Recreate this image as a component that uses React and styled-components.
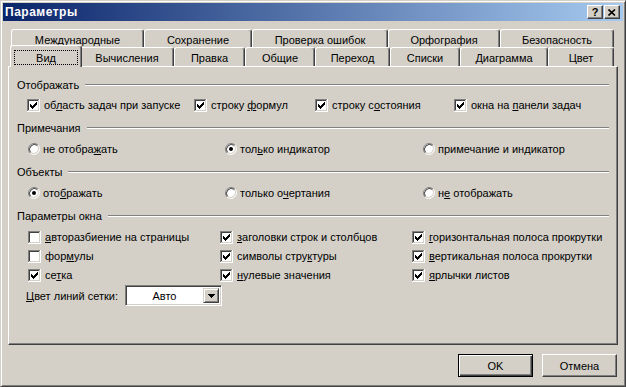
import React from 'react';
import styled, { createGlobalStyle } from 'styled-components';

const backTabs = [
  { name: 'Международные', w: 133 },
  { name: 'Сохранение', w: 108 },
  { name: 'Проверка ошибок', w: 136 },
  { name: 'Орфография', w: 112 },
  { name: 'Безопасность', w: 114 },
];

const frontTabs = [
  { name: 'Вид', w: 68, active: true },
  { name: 'Вычисления', w: 94 },
  { name: 'Правка', w: 71 },
  { name: 'Общие', w: 70 },
  { name: 'Переход', w: 75 },
  { name: 'Списки', w: 70 },
  { name: 'Диаграмма', w: 88 },
  { name: 'Цвет', w: 66 },
];

const showItems = [
  { label: 'об&ласть задач при запуске', on: true },
  { label: 'строку &формул', on: true },
  { label: 'строку с&остояния', on: true },
  { label: 'окна на &панели задач', on: true },
];

const notes = [
  { label: 'не отобра&жать', on: false },
  { label: 'тол&ько индикатор', on: true },
  { label: 'примечание и ин&дикатор', on: false },
];

const objects = [
  { label: 'ото&бражать', on: true },
  { label: 'только о&чертания', on: false },
  { label: 'н&е отображать', on: false },
];

// по строкам сетки: три столбца в каждой
const windowOpts = [
  { label: '&авторазбиение на страницы', on: false },
  { label: '&заголовки строк и столбцов', on: true },
  { label: '&горизонтальная полоса прокрутки', on: true },
  { label: 'фор&мулы', on: false },
  { label: 'символы стру&ктуры', on: true },
  { label: '&вертикальная полоса прокрутки', on: true },
  { label: 'се&тка', on: true },
  { label: '&нулевые значения', on: true },
  { label: '&ярлычки листов', on: true },
];

const GlobalStyle = createGlobalStyle`
  html, body {
    margin: 0;
    padding: 0;
    background: #d4d0c8;
  }
  body {
    font-family: "Liberation Sans", Arial, sans-serif;
    font-size: 11px;
    color: #000;
  }
`;

const Window = styled.div`
  box-sizing: border-box;
  width: 626px;
  height: 387px;
  background: #d4d0c8;
  border: 1px solid;
  border-color: #d4d0c8 #404040 #404040 #d4d0c8;
  box-shadow: inset 1px 1px #fff, inset -1px -1px #808080;
  padding: 2px;
  display: flex;
  flex-direction: column;
`;

const TitleBar = styled.div`
  height: 18px;
  display: flex;
  align-items: center;
  padding: 0 3px 0 2px;
  background: linear-gradient(to right, #0a246a, #a6caf0);
`;

const Title = styled.div`
  flex: 1;
  color: #fff;
  font-weight: bold;
  font-size: 12px;
  letter-spacing: 0.5px;
`;

const CaptionButtons = styled.div`
  display: flex;
  gap: 1px;
`;

const CaptionButton = styled.div`
  box-sizing: border-box;
  width: 16px;
  height: 14px;
  background: #d4d0c8;
  border: 1px solid;
  border-color: #fff #404040 #404040 #fff;
  box-shadow: inset -1px -1px #808080;
  display: flex;
  align-items: center;
  justify-content: center;
  font-weight: bold;
  font-size: 11px;
  line-height: 1;
`;

const Body = styled.div`
  flex: 1;
  display: flex;
  flex-direction: column;
  padding: 8px 5px 7px 5px;
`;

const TabRow = styled.div`
  display: flex;
  align-items: flex-end;
  height: ${p => p.$h}px;
  padding-left: ${p => p.$indent}px;
`;

const Tab = styled.div`
  box-sizing: border-box;
  flex: none;
  width: ${p => (p.$active ? p.$w + 4 : p.$w)}px;
  height: ${p => (p.$active ? 22 : p.$h)}px;
  margin: ${p => (p.$active ? '0 -2px -1px -2px' : '0')};
  position: relative;
  z-index: ${p => (p.$active ? 2 : 1)};
  background: #d4d0c8;
  border-top: 1px solid #fff;
  border-left: 1px solid #fff;
  border-right: 1px solid #404040;
  border-radius: 3px 3px 0 0;
  box-shadow: inset -1px 0 #808080;
  display: flex;
  align-items: ${p => (p.$active ? 'flex-start' : 'center')};
  justify-content: center;
  padding-top: ${p => (p.$active ? 4 : 2)}px;
  font-size: 11px;
`;

const FocusBox = styled.span`
  box-sizing: border-box;
  display: flex;
  align-items: center;
  justify-content: center;
  width: 64px;
  height: 15px;
  border: 1px dotted #000;
`;

const Panel = styled.div`
  box-sizing: border-box;
  height: 279px;
  border: 1px solid;
  border-color: #fff #404040 #404040 #fff;
  box-shadow: inset -1px -1px #808080;
  padding: 11px 8px 0 8px;
  display: flex;
  flex-direction: column;
`;

const Legend = styled.div`
  display: flex;
  align-items: center;
  height: 14px;
  margin-top: ${p => p.$top || 0}px;
`;

const Rule = styled.div`
  flex: 1;
  margin-left: 6px;
  border-top: 1px solid #808080;
  border-bottom: 1px solid #fff;
`;

const OptionGrid = styled.div`
  display: grid;
  grid-template-columns: ${p => p.$cols};
  grid-auto-rows: 18px;
  row-gap: 1px;
  padding-left: ${p => p.$indent}px;
  margin-top: ${p => p.$top}px;
`;

const Option = styled.label`
  display: flex;
  align-items: center;
  gap: ${p => p.$gap}px;
  white-space: nowrap;
`;

const ColorRow = styled.div`
  display: flex;
  align-items: center;
  height: 21px;
  margin-top: 1px;
  padding-left: 9px;
`;

const ColorLabel = styled.span`
  width: 99px;
`;

const Combo = styled.div`
  box-sizing: border-box;
  width: 97px;
  height: 21px;
  border: 1px solid;
  border-color: #808080 #fff #fff #808080;
  box-shadow: inset 1px 1px #404040, inset -1px -1px #d4d0c8;
  background: #fff;
  display: flex;
  padding: 2px;
`;

const ComboText = styled.div`
  flex: 1;
  display: flex;
  align-items: center;
  justify-content: center;
  padding-right: 2px;
`;

const ComboButton = styled.div`
  box-sizing: border-box;
  width: 16px;
  height: 15px;
  background: #d4d0c8;
  border: 1px solid;
  border-color: #d4d0c8 #404040 #404040 #d4d0c8;
  box-shadow: inset 1px 1px #fff, inset -1px -1px #808080;
  display: flex;
  align-items: center;
  justify-content: center;
`;

const Footer = styled.div`
  display: flex;
  justify-content: flex-end;
  gap: 9px;
  margin-top: 9px;
  padding-right: 1px;
`;

const Button = styled.div`
  box-sizing: border-box;
  width: 75px;
  height: 23px;
  display: flex;
  align-items: center;
  justify-content: center;
  background: #d4d0c8;
  border: 1px solid;
  border-color: ${p => (p.$default ? '#000' : '#fff #404040 #404040 #fff')};
  box-shadow: ${p =>
    p.$default
      ? 'inset 1px 1px #fff, inset -1px -1px #404040, inset -2px -2px #808080'
      : 'inset -1px -1px #808080'};
`;

// "&" ставится перед буквой с подчёркиванием
const Label = ({ text }) => {
  const i = text.indexOf('&');
  if (i < 0) return <span>{text}</span>;
  return (
    <span>
      {text.slice(0, i)}
      <u>{text[i + 1]}</u>
      {text.slice(i + 2)}
    </span>
  );
};

const checkPixels = [
  [6, 0], [5, 1], [6, 1], [0, 2], [4, 2], [5, 2], [6, 2],
  [0, 3], [1, 3], [3, 3], [4, 3], [5, 3], [0, 4], [1, 4], [2, 4], [3, 4], [4, 4],
  [1, 5], [2, 5], [3, 5], [2, 6],
];

const CheckBox = ({ on }) => (
  <svg width="13" height="13" viewBox="0 0 13 13" shapeRendering="crispEdges">
    <rect x="0" y="0" width="13" height="13" fill="#fff" />
    <path d="M0 0.5H12.5M0.5 0V12" stroke="#808080" />
    <path d="M1 1.5H11.5M1.5 1V11" stroke="#404040" />
    <path d="M0 12.5H13M12.5 0V13" stroke="#fff" />
    <path d="M1 11.5H12M11.5 1V12" stroke="#d4d0c8" />
    {on && checkPixels.map(([x, y]) => (
      <rect key={x + '-' + y} x={x + 3} y={y + 3} width="1" height="1" fill="#000" />
    ))}
  </svg>
);

const Radio = ({ on }) => (
  <svg width="12" height="12" viewBox="0 0 12 12">
    <circle cx="6" cy="6" r="5" fill="#fff" />
    <path d="M1.76 10.24A6 6 0 0 1 10.24 1.76" stroke="#808080" fill="none" transform="translate(0.35 0.35) scale(0.94)" />
    <path d="M10.24 1.76A6 6 0 0 1 1.76 10.24" stroke="#fff" fill="none" transform="translate(0.35 0.35) scale(0.94)" />
    <path d="M2.5 9.5A5 5 0 0 1 9.5 2.5" stroke="#404040" fill="none" />
    <path d="M9.5 2.5A5 5 0 0 1 2.5 9.5" stroke="#d4d0c8" fill="none" />
    {on && <circle cx="6" cy="6" r="2" fill="#000" />}
  </svg>
);

const Section = ({ title, top }) => (
  <Legend $top={top}>
    <span>{title}</span>
    <Rule />
  </Legend>
);

export default function App() {
  return (
    <>
      <GlobalStyle />
      <Window>
        <TitleBar>
          <Title>Параметры</Title>
          <CaptionButtons>
            <CaptionButton>?</CaptionButton>
            <CaptionButton>
              <svg width="8" height="7" viewBox="0 0 8 7">
                <path d="M0.5 0.5L7 6.5M7 0.5L0.5 6.5" stroke="#000" strokeWidth="1.6" />
              </svg>
            </CaptionButton>
          </CaptionButtons>
        </TitleBar>
        <Body>
          <TabRow $h={18} $indent={3}>
            {backTabs.map(t => (
              <Tab key={t.name} $w={t.w} $h={18}>{t.name}</Tab>
            ))}
          </TabRow>
          <TabRow $h={19} $indent={4}>
            {frontTabs.map(t => (
              <Tab key={t.name} $w={t.w} $h={19} $active={t.active}>
                {t.active ? <FocusBox>{t.name}</FocusBox> : t.name}
              </Tab>
            ))}
          </TabRow>
          <Panel>
            <Section title="Отображать" />
            <OptionGrid $cols="167px 121px 139px auto" $indent={10} $top={4}>
              {showItems.map(o => (
                <Option key={o.label} $gap={4}>
                  <CheckBox on={o.on} />
                  <Label text={o.label} />
                </Option>
              ))}
            </OptionGrid>

            <Section title="Примечания" top={7} />
            <OptionGrid $cols="197px 198px auto" $indent={11} $top={5}>
              {notes.map(o => (
                <Option key={o.label} $gap={3}>
                  <Radio on={o.on} />
                  <Label text={o.label} />
                </Option>
              ))}
            </OptionGrid>

            <Section title="Объекты" top={7} />
            <OptionGrid $cols="197px 198px auto" $indent={11} $top={5}>
              {objects.map(o => (
                <Option key={o.label} $gap={3}>
                  <Radio on={o.on} />
                  <Label text={o.label} />
                </Option>
              ))}
            </OptionGrid>

            <Section title="Параметры окна" top={7} />
            <OptionGrid $cols="192px 192px auto" $indent={11} $top={5}>
              {windowOpts.map(o => (
                <Option key={o.label} $gap={4}>
                  <CheckBox on={o.on} />
                  <Label text={o.label} />
                </Option>
              ))}
            </OptionGrid>

            <ColorRow>
              <ColorLabel><Label text="&Цвет линий сетки:" /></ColorLabel>
              <Combo>
                <ComboText>Авто</ComboText>
                <ComboButton>
                  <svg width="7" height="4" viewBox="0 0 7 4" shapeRendering="crispEdges">
                    <path d="M0 0H7L3.5 4Z" fill="#000" />
                  </svg>
                </ComboButton>
              </Combo>
            </ColorRow>
          </Panel>
          <Footer>
            <Button $default>OK</Button>
            <Button>Отмена</Button>
          </Footer>
        </Body>
      </Window>
    </>
  );
}
